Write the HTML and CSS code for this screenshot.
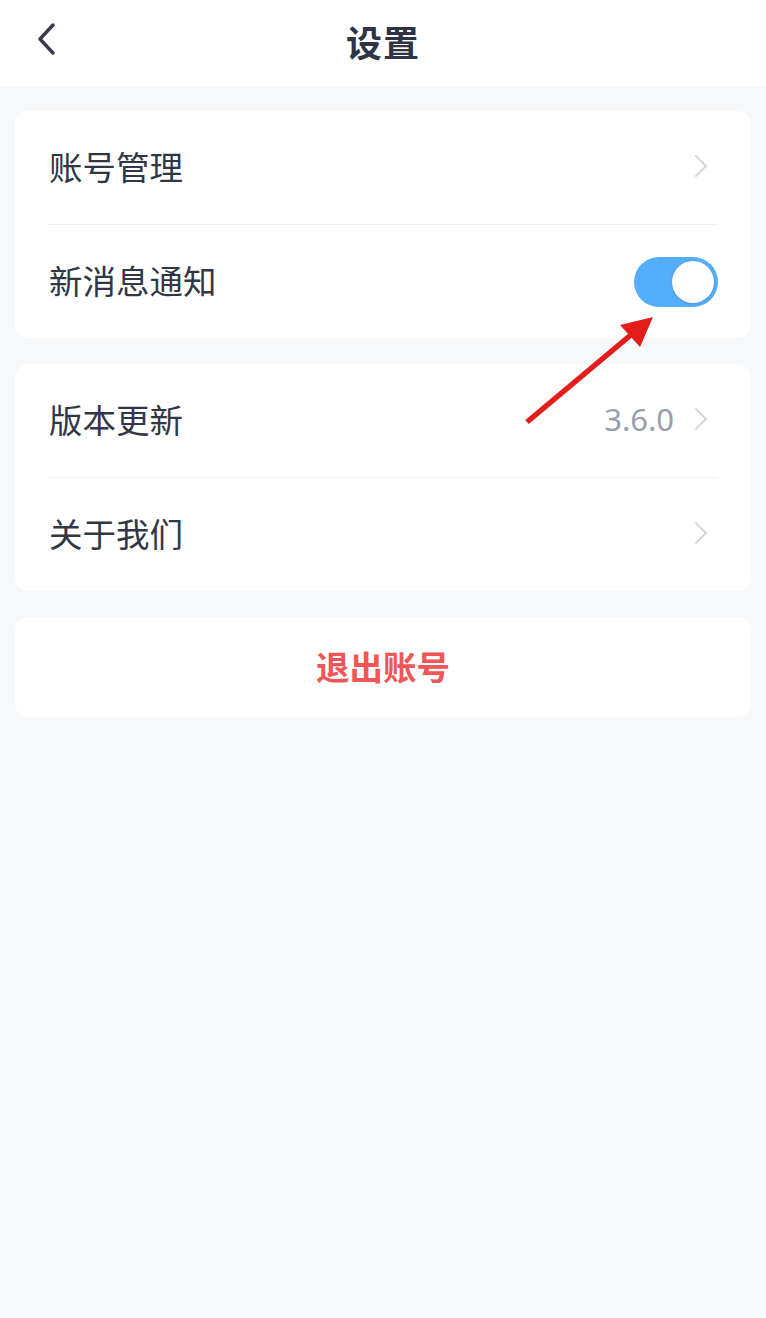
FILE: index.html
```html
<!DOCTYPE html>
<html lang="zh-CN">
<head>
  <meta charset="UTF-8">
  <title>设置</title>
  <meta name="viewport" content="width=device-width, initial-scale=1">
  <link rel="stylesheet" href="styles.css">
</head>
<body>
  <header class="nav-bar">
    <button class="back-btn" aria-label="返回">
      <svg width="24" height="34" viewBox="0 0 24 34">
        <path d="M18 3 L5 17 L18 31" fill="none" stroke="#343a4a" stroke-width="3.4" stroke-linecap="round" stroke-linejoin="round"/>
      </svg>
    </button>
    <h1>设置</h1>
  </header>

  <main class="page">
    <section class="card">
      <div class="row">
        <span class="label">账号管理</span>
        <span class="chevron"></span>
      </div>
      <div class="row">
        <span class="label">新消息通知</span>
        <span class="switch on"><span class="knob"></span></span>
      </div>
    </section>

    <section class="card">
      <div class="row">
        <span class="label">版本更新</span>
        <span class="value">3.6.0</span>
        <span class="chevron"></span>
      </div>
      <div class="row">
        <span class="label">关于我们</span>
        <span class="chevron"></span>
      </div>
    </section>

    <section class="card logout">
      <span>退出账号</span>
    </section>
  </main>

  <!-- annotation arrow pointing at the switch -->
  <svg class="annotation" width="766" height="460" viewBox="0 0 766 460">
    <line x1="527" y1="422" x2="632" y2="334" stroke="#e41c1c" stroke-width="5.5" stroke-linecap="butt"/>
    <polygon points="653,317 620,325 640,347" fill="#e41c1c"/>
  </svg>
</body>
</html>
```

FILE: styles.css
```css
:root {
  --bg: #f7f8fa;
  --card: #ffffff;
  --text: #323744;
  --muted: #979fad;
  --line: #eeeff2;
  --accent: #55adfd;
  --danger: #f05656;
}

* {
  box-sizing: border-box;
}

body {
  margin: 0;
  min-height: 100vh;
  background-color: var(--bg);
  font-family: "Noto Sans CJK SC", "Noto Sans", sans-serif;
  color: var(--text);
  position: relative;
}

.nav-bar {
  height: 86px;
  background-color: var(--card);
  display: flex;
  align-items: center;
  justify-content: center;
  position: relative;
}

.nav-bar h1 {
  margin: 0;
  font-size: 36px;
  font-weight: 700;
  color: #2e3444;
  letter-spacing: 1px;
  line-height: 1;
  padding-bottom: 4px;
}

.back-btn {
  position: absolute;
  left: 35px;
  top: 22px;
  padding: 0;
  border: none;
  background: none;
  cursor: pointer;
  display: flex;
}

.page {
  padding: 25px 15px;
  display: flex;
  flex-direction: column;
  gap: 26px;
}

.card {
  background-color: var(--card);
  border-radius: 14px;
  padding: 0 33px;
}

.row {
  height: 113px;
  display: flex;
  align-items: center;
  gap: 20px;
}

.row + .row {
  height: 114px;
  border-top: 1px solid var(--line);
}

.label {
  flex: 1;
  font-size: 33.5px;
  padding-left: 1px;
  padding-bottom: 4px;
}

.value {
  font-family: "Noto Sans", sans-serif;
  font-size: 31px;
  color: var(--muted);
  padding-bottom: 4px;
}

.chevron {
  width: 14px;
  height: 24px;
  margin-right: 10px;
  margin-bottom: 4px;
  position: relative;
}

.chevron::before {
  content: "";
  position: absolute;
  top: 4px;
  left: -6px;
  width: 14px;
  height: 14px;
  border-top: 2.5px solid #d2d5db;
  border-right: 2.5px solid #d2d5db;
  transform: rotate(45deg);
}

.switch {
  width: 84px;
  height: 50px;
  border-radius: 25px;
  background-color: #dcdee3;
  display: flex;
  align-items: center;
  padding: 0 4px;
}

.switch.on {
  background-color: var(--accent);
  justify-content: flex-end;
}

.knob {
  width: 42px;
  height: 42px;
  border-radius: 50%;
  background-color: #fff;
  box-shadow: 0 1px 3px rgba(0, 0, 0, 0.15);
}

.logout {
  height: 100px;
  display: flex;
  align-items: center;
  justify-content: center;
  font-size: 33.5px;
  font-weight: 700;
  color: var(--danger);
}

.logout span {
  padding-bottom: 4px;
}

.annotation {
  position: absolute;
  top: 0;
  left: 0;
  pointer-events: none;
}
```
